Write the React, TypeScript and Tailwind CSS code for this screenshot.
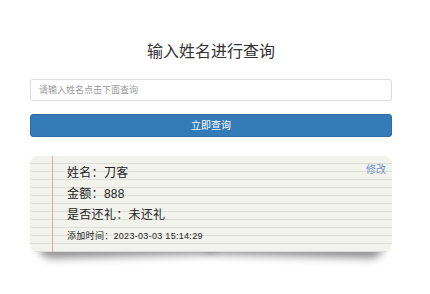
import React from 'react'

const cjk = { fontFamily: '"Liberation Sans", "Noto Sans CJK SC", sans-serif' }

function RecordCard() {
  return (
    <div className="relative mt-[19px]">
      {/* lifted corner shadows */}
      <div className="absolute bottom-[4px] left-[8px] h-[14px] w-[50%] -rotate-[1.5deg] rounded-b-full shadow-[0_8px_8px_rgba(0,0,0,0.45)]" />
      <div className="absolute bottom-[4px] right-[8px] h-[14px] w-[50%] rotate-[1.5deg] rounded-b-full shadow-[0_8px_8px_rgba(0,0,0,0.45)]" />
      <div
        className="relative h-[96px] overflow-hidden rounded-[8px] bg-[#f3f3ee] pl-[37px] pr-[6px] pt-[7px]"
        style={{
          backgroundImage:
            'repeating-linear-gradient(to bottom, transparent 0px, transparent 7px, #deded8 7px, #deded8 8px)',
        }}
      >
        <div className="absolute bottom-0 left-[22px] top-0 w-px bg-[#eba4a4]" />
        <div className="flex flex-col text-[#222]" style={cjk}>
          <div className="flex h-[21px] items-start justify-between">
            <span className="text-[12px] leading-[21px] tracking-[0.3px]">姓名：刀客</span>
            <span className="text-[10px] leading-[14px] text-[#7391c4]">修改</span>
          </div>
          <div className="h-[21px] text-[12px] leading-[21px] tracking-[0.3px]">金额：888</div>
          <div className="h-[21px] text-[12px] leading-[21px] tracking-[0.3px]">是否还礼：未还礼</div>
          <div className="h-[21px] text-[9px] leading-[21px] tracking-[0.3px]">添加时间：2023-03-03 15:14:29</div>
        </div>
      </div>
    </div>
  )
}

export default function App() {
  return (
    <div className="min-h-[294px] bg-white pl-[30px] pr-[38px] pt-[40px]" style={cjk}>
      <h1 className="text-center text-[16px] leading-[24px] text-[#333]">输入姓名进行查询</h1>
      <input
        className="mt-[15px] block h-[22px] w-full rounded-[3px] border border-[#dcdcdc] px-[8px] text-[9px] text-[#555] outline-none placeholder:text-[#999]"
        placeholder="请输入姓名点击下面查询"
      />
      <button className="mt-[13px] block h-[23px] w-full rounded-[3px] border border-[#2e6da4] bg-[#337ab7] text-[10px] text-white">
        立即查询
      </button>
      <RecordCard />
    </div>
  )
}
